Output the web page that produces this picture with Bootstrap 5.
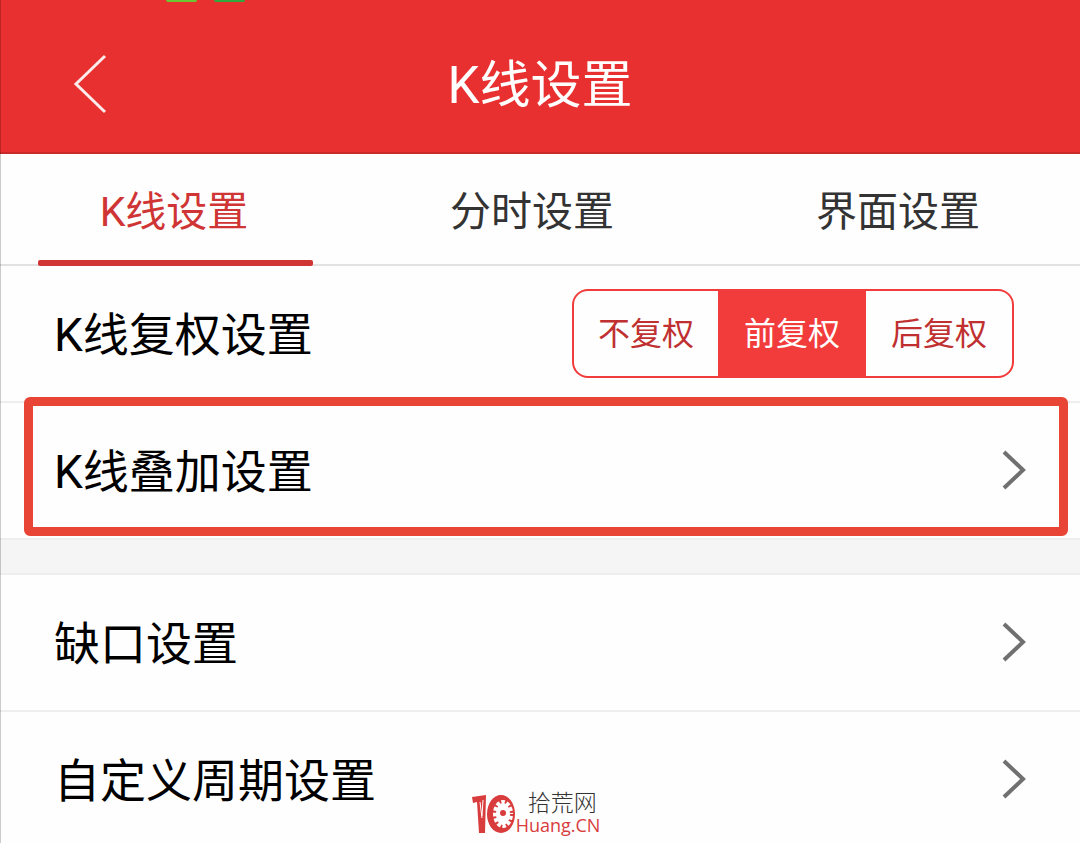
<!DOCTYPE html>
<html lang="zh-CN">
<head>
<meta charset="utf-8">
<meta name="viewport" content="width=device-width, initial-scale=1">
<title>K线设置</title>
<link href="https://cdn.jsdelivr.net/npm/bootstrap@5.3.0/dist/css/bootstrap.min.css" rel="stylesheet">
<style>
  body { font-family: Roboto, "Noto Sans CJK SC", sans-serif; color: #000; background: #fefefe; }
  .app-page { min-height: 100vh; }
  .edge-line { left: 0; top: 0; bottom: 0; width: 1px; background: rgba(0, 0, 0, .2); z-index: 3; }
  .app-header { height: 154px; background: #e93030; border-bottom: 2px solid #c92a2a; padding-top: 20px; }
  .app-header h1 { font-size: 51px; line-height: 60px; font-weight: 400; }
  .back-btn { left: 60px; top: 48px; }
  .status-dots { left: 166px; top: 0; gap: 17px; }
  .status-dot { width: 31px; height: 2px; border-radius: 0 0 4px 4px; background: #6cc832; }
  .status-dot-dark { background: #2fa83c; }
  .tab-grid { display: grid; grid-template-columns: 348fr 368fr 364fr; height: 112px; border-bottom: 2px solid #e2e2e2; }
  .tab-item { font-size: 41px; line-height: 48px; color: #333; text-decoration: none; padding-top: 6px; }
  .tab-item.active { color: #d03535; }
  .tab-item.active::after { content: ""; position: absolute; left: 38px; right: 35px; bottom: -2px; height: 6px; border-radius: 2px; background: #d03535; }
  .set-row { height: 137px; padding: 2px 54px 0; border-bottom: 2px solid #eee; font-size: 46px; line-height: 56px; color: #000; text-decoration: none; }
  .set-row svg { margin-bottom: 4px; }
  .set-row-last { height: 132px; border-bottom: 0; padding-top: 6px; }
  .seg-row { padding-right: 66px; }
  .seg-group { width: 442px; height: 89px; margin-bottom: 2px; border: 2px solid #f23c3c; border-radius: 16px; overflow: hidden; display: grid; grid-template-columns: 144fr 148fr 146fr; }
  .seg-group label { font-size: 32px; line-height: 40px; color: #c03030; cursor: pointer; }
  .seg-group input:checked + label { background: #f23c3c; color: #fff; }
  .mark-frame { inset: -6px 12px 2px 24px; border: 9px solid #e94537; border-radius: 6px; pointer-events: none; z-index: 2; }
  .band { height: 35px; background: #f5f5f5; border-bottom: 2px solid #eee; }
  .site-logo { left: 0; right: 0; bottom: 10px; padding-right: 8px; pointer-events: none; }
  .site-cn { font-size: 23px; line-height: 24px; font-weight: 300; color: #333; padding-left: 12px; }
  .site-en { font-family: "Open Sans", sans-serif; font-size: 18px; line-height: 18px; color: #d93c3c; }
</style>
</head>
<body>
<div class="app-page position-relative">
  <div class="edge-line position-absolute"></div>
  <header class="app-header position-relative d-flex align-items-center justify-content-center text-white">
    <div class="status-dots position-absolute d-flex"><span class="status-dot"></span><span class="status-dot status-dot-dark"></span></div>
    <button type="button" class="back-btn btn p-0 border-0 position-absolute" aria-label="返回">
      <svg class="d-block" width="60" height="72" viewBox="0 0 60 72" fill="none" stroke="#fff" stroke-opacity=".9" stroke-width="3"><path d="M45 8 16 36l29 28"/></svg>
    </button>
    <h1 class="m-0">K线设置</h1>
  </header>
  <nav class="tab-grid">
    <a href="#kline" class="tab-item active position-relative d-flex align-items-center justify-content-center">K线设置</a>
    <a href="#minute" class="tab-item d-flex align-items-center justify-content-center">分时设置</a>
    <a href="#ui" class="tab-item d-flex align-items-center justify-content-center">界面设置</a>
  </nav>
  <main>
    <div class="set-row seg-row d-flex align-items-center justify-content-between">
      <span>K线复权设置</span>
      <div class="seg-group" role="group" aria-label="K线复权设置">
        <input type="radio" class="btn-check" name="adjust" id="adj-none"><label for="adj-none" class="d-flex align-items-center justify-content-center">不复权</label>
        <input type="radio" class="btn-check" name="adjust" id="adj-front" checked><label for="adj-front" class="d-flex align-items-center justify-content-center">前复权</label>
        <input type="radio" class="btn-check" name="adjust" id="adj-back"><label for="adj-back" class="d-flex align-items-center justify-content-center">后复权</label>
      </div>
    </div>
    <a href="#overlay" class="set-row position-relative d-flex align-items-center justify-content-between">
      <span>K线叠加设置</span>
      <svg width="24" height="40" viewBox="0 0 24 40" fill="none" stroke="#707070" stroke-width="4"><path d="M2 2 21 20 2 38"/></svg>
      <span class="mark-frame position-absolute"></span>
    </a>
    <div class="band"></div>
    <a href="#gap" class="set-row d-flex align-items-center justify-content-between">
      <span>缺口设置</span>
      <svg width="24" height="40" viewBox="0 0 24 40" fill="none" stroke="#707070" stroke-width="4"><path d="M2 2 21 20 2 38"/></svg>
    </a>
    <a href="#period" class="set-row set-row-last d-flex align-items-center justify-content-between">
      <span>自定义周期设置</span>
      <svg width="24" height="40" viewBox="0 0 24 40" fill="none" stroke="#707070" stroke-width="4"><path d="M2 2 21 20 2 38"/></svg>
    </a>
  </main>
  <div class="site-logo position-absolute d-flex justify-content-center align-items-end">
    <svg width="44" height="40" viewBox="0 0 44 40">
      <path fill="#d93c3c" d="M0 3 14 1l-1 38H7L5 8 1 9z"/>
      <path d="M8 8l2 16M11 6l-1 16" stroke="#fff" stroke-width="1"/>
      <ellipse cx="29" cy="20" rx="14" ry="19" fill="#d93c3c"/>
      <ellipse cx="31" cy="20" rx="10" ry="14" fill="#fff"/>
      <ellipse cx="31" cy="20" rx="9" ry="13" fill="none" stroke="#d93c3c" stroke-width="4" stroke-dasharray="2 4"/>
      <circle cx="31" cy="19" r="3" fill="#d93c3c"/>
    </svg>
    <div class="d-flex flex-column"><span class="site-cn">拾荒网</span><span class="site-en">Huang.CN</span></div>
  </div>
</div>
<script src="https://cdn.jsdelivr.net/npm/bootstrap@5.3.0/dist/js/bootstrap.bundle.min.js"></script>
</body>
</html>
